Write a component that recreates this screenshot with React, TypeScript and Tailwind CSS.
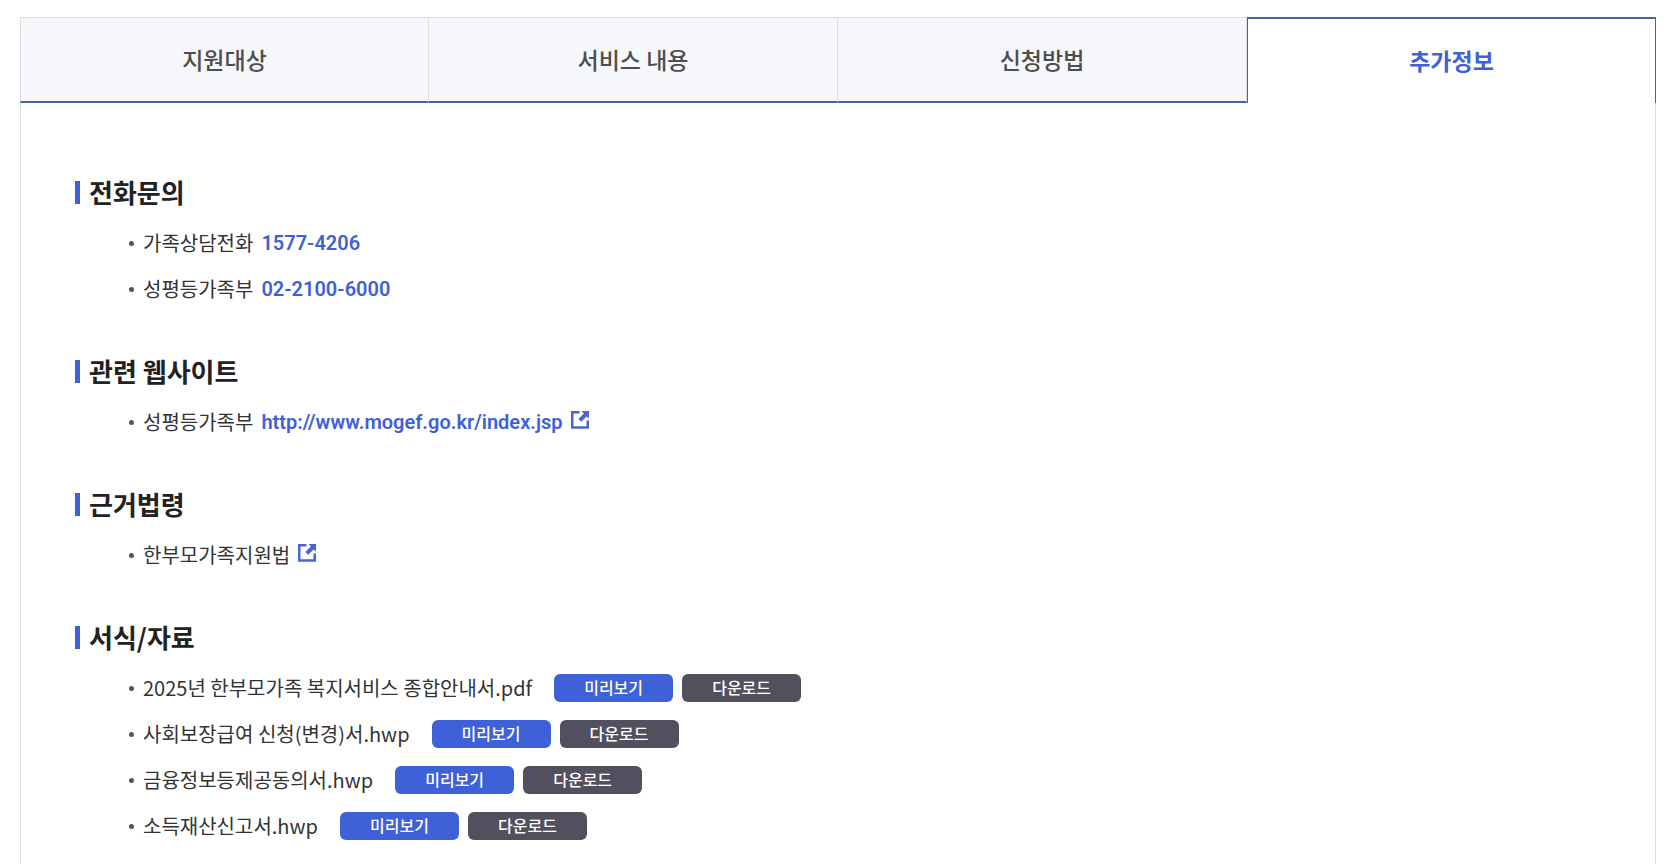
import { useState } from "react";

const tabs = ["지원대상", "서비스 내용", "신청방법", "추가정보"];

const phones = [
  { name: "가족상담전화", number: "1577-4206" },
  { name: "성평등가족부", number: "02-2100-6000" },
];

const files = [
  "2025년 한부모가족 복지서비스 종합안내서.pdf",
  "사회보장급여 신청(변경)서.hwp",
  "금융정보등제공동의서.hwp",
  "소득재산신고서.hwp",
];

const linkFont = "ml-2 font-['Roboto','Noto_Sans_CJK_KR',sans-serif] text-xl font-semibold text-[#3e61d7]";

function ExternalIcon() {
  return (
    <svg width="18" height="18" viewBox="0 0 18 18" aria-hidden="true" className="mb-1 ml-2 shrink-0">
      <path d="M8.5 1.25H1.25V16.5H16.75V9.5" fill="none" stroke="#4a66cc" strokeWidth="2.5" />
      <path d="M10.5 0H18V7.5L15.6 5.4L10.2 10.8L7.4 8L12.8 2.6Z" fill="#4a66cc" />
    </svg>
  );
}

function Section({ title, children }: { title: string; children: React.ReactNode }) {
  return (
    <section>
      <h2 className="flex h-9 items-center gap-[9px] text-[26px] leading-9 font-bold text-[#222]">
        <span className="h-[23px] w-[5px] bg-[#3e61d7]" />
        {title}
      </h2>
      <ul className="mt-[10px] pl-[54px]">{children}</ul>
    </section>
  );
}

function Item({ children }: { children: React.ReactNode }) {
  return (
    <li className="flex h-[46px] items-center text-xl text-[#333]">
      <span className="mr-[9px] size-[5px] shrink-0 rounded-full bg-[#555]" />
      {children}
    </li>
  );
}

export default function App() {
  const [active, setActive] = useState(3);
  return (
    <main className="min-h-screen bg-white pt-[17px] pr-[19px] pl-5 font-['Noto_Sans_CJK_KR','Noto_Sans',sans-serif]">
      <div role="tablist" className="grid grid-cols-4">
        {tabs.map((tab, i) => (
          <button
            key={tab}
            type="button"
            role="tab"
            aria-selected={i === active}
            onClick={() => setActive(i)}
            className={
              i === active
                ? "h-[86px] border-x border-t-2 border-[#4862a9] bg-white pb-0.5 text-[23px] font-bold text-[#3e61d7]"
                : "h-[86px] border-t border-r border-b-2 border-t-[#ddd] border-r-[#ddd] border-b-[#4862a9] bg-[#f5f7fb] text-[23px] font-medium text-[#4d4d4d] first:border-l first:border-l-[#ddd]"
            }
          >
            {tab}
          </button>
        ))}
      </div>
      <div role="tabpanel" className="flex min-h-[calc(100vh-103px)] flex-col gap-[41px] border-x border-[#ddd] px-[54px] pt-[71px]">
        <Section title="전화문의">
          {phones.map((p) => (
            <Item key={p.number}>
              {p.name}
              <a href={`tel:${p.number}`} className={linkFont}>
                {p.number}
              </a>
            </Item>
          ))}
        </Section>
        <Section title="관련 웹사이트">
          <Item>
            성평등가족부
            <a href="http://www.mogef.go.kr/index.jsp" className={`flex items-center ${linkFont}`}>
              http://www.mogef.go.kr/index.jsp
              <ExternalIcon />
            </a>
          </Item>
        </Section>
        <Section title="근거법령">
          <Item>
            <a href="#law" className="flex items-center">
              한부모가족지원법
              <ExternalIcon />
            </a>
          </Item>
        </Section>
        <Section title="서식/자료">
          {files.map((file) => (
            <Item key={file}>
              {file}
              <button type="button" className="ml-[22px] h-7 w-[119px] rounded-md bg-[#3e61d7] pb-0.5 text-base leading-6 font-medium text-white">
                미리보기
              </button>
              <button type="button" className="ml-[9px] h-7 w-[119px] rounded-md bg-[#52505e] pb-0.5 text-base leading-6 font-medium text-white">
                다운로드
              </button>
            </Item>
          ))}
        </Section>
      </div>
    </main>
  );
}
